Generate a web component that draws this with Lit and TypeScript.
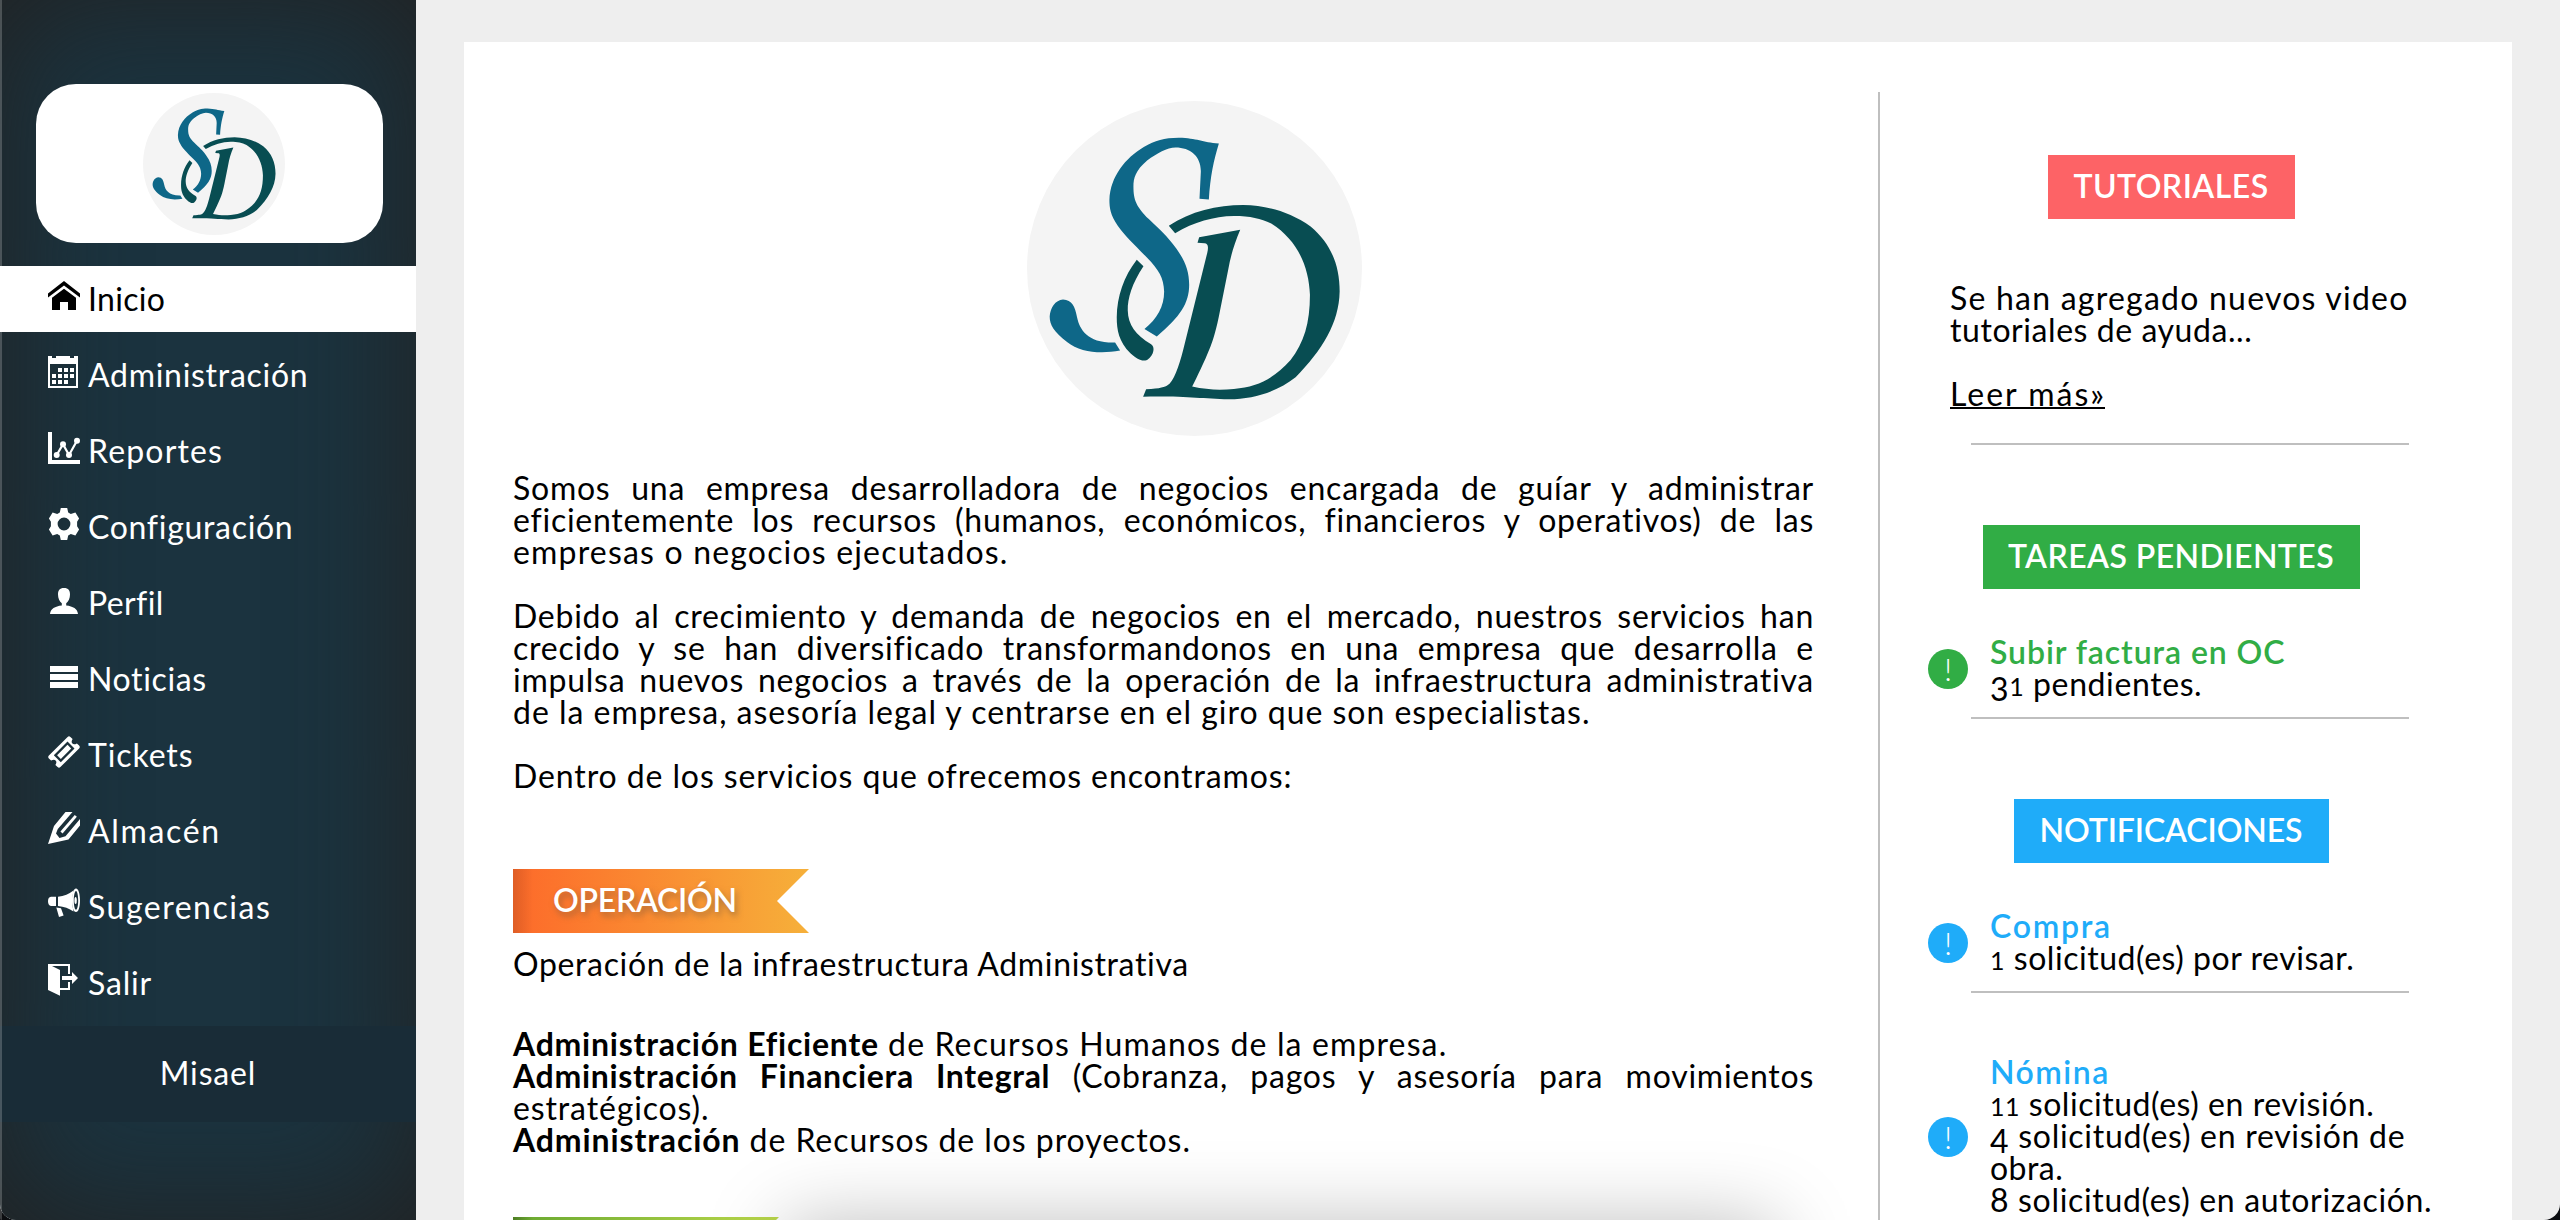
import { LitElement, html, svg, css } from "lit";
import { customElement, property } from "lit/decorators.js";

const ICONS: Record<string, unknown> = {
  home: svg`<path d="M16 1 32 13.5v4L16 5.5 0 17.5v-4zM16 8.7l12 9V30h-8v-8h-8v8H4V17.7z"/>`,
  calendar: svg`<path fill-rule="evenodd" d="M0 0h4v2h4V0h14v2h4V0h4v32H0zM2 8v22h26V8zM10 12h4v4h-4zm6 0h4v4h-4zm6 0h4v4h-4zM4 18h4v4H4zm6 0h4v4h-4zm6 0h4v4h-4zm6 0h4v4h-4zM4 24h4v4H4zm6 0h4v4h-4zm6 0h4v4h-4z"/>`,
  chart: svg`<path d="M0 0h4v28h28v4H0z"/><path d="M8.7 23 15 12.3 21 23 29 8.7" fill="none" stroke="currentColor" stroke-width="2.2"/><circle cx="8.7" cy="23" r="3"/><circle cx="15" cy="12.3" r="3"/><circle cx="21" cy="23" r="3"/><circle cx="29" cy="8.7" r="3"/>`,
  gear: svg`<path fill-rule="evenodd" d="M12.8 0h6.4l1 4.6 2.6 1.5 4.6-1.5 3.7 6-2 3.2v4.4l2 3.2-3.7 6-4.6-1.5-2.6 1.5-1 4.6h-6.4l-1-4.6-2.6-1.5-4.6 1.5-3.7-6 2-3.2v-4.4l-2-3.2 3.7-6 4.6 1.5 2.6-1.5zM16 9.6a6.4 6.4 0 1 0 0 12.8 6.4 6.4 0 0 0 0-12.8z"/>`,
  person: svg`<path d="M16 4c4.5 0 6 2.5 6 6.5 0 4-1.6 7-3.8 8.7v2.4C25 22.3 29.5 25 30 30H2c.5-5 5-7.7 11.8-8.4v-2.4C11.6 17.5 10 14.5 10 10.5 10 6.5 11.5 4 16 4z"/>`,
  lines: svg`<path d="M2 6h28v6H2zm0 8h28v6H2zm0 8h28v6H2z"/>`,
  ticket: svg`<path fill-rule="evenodd" d="M19.6.9Q21-.5 22.4.9L24.6 3.1Q22.8 6 24.4 7.6 26 9.2 28.9 7.4L31.1 9.6Q32.5 11 31.1 12.4L12.4 31.1Q11 32.5 9.6 31.1L7.4 28.9Q9.2 26 7.6 24.4 6 22.8 3.1 24.6L.9 22.4Q-.5 21 .9 19.6zM19.5 5.5 5.8 19.2 12.8 26.2 26.5 12.5z"/><path d="M19.5 8.8 23.2 12.5 12.8 22.9 9.1 19.2z"/>`,
  pencil: svg`<path d="M0 32 6 14 17.5 0H24.5L9.8 17 8 21.5 11.5 26 17.5 24.2 32 7V13.5L20.5 27.5z"/><path d="M27.8 3.8 13.5 20.5" fill="none" stroke="currentColor" stroke-width="2.8"/>`,
  horn: svg`<path d="M8 8.7v9.3H3Q0 17.5 0 13.3 0 9 3 8.7zM10 8.7Q19 7.5 25.5 2.4 23 13 25.5 23.6 19 18.8 10 18zM8.3 19.6l4.7.6 2.6 7.3-4.6 1.5z"/><path fill-rule="evenodd" d="M28 .5c2.5 0 4 5.500 4 12s-1.500 11.600-4 11.600-4-5.100-4-11.600 1.500-12 4-12zm0 2.500c-1.200 0-2.200 4.400-2.200 9.500s1 9.200 2.200 9.200 2.200-4.100 2.200-9.200-1-9.500-2.200-9.500z"/><ellipse cx="27.600" cy="12.600" rx="1.200" ry="3.500"/>`,
  exit: svg`<path d="M0 0h22v10h-2V2H4l8 4v25.700L0 26zM12 24h8v-6h2v8H12zM14 12h10V8l6 6-6 6v-4H14z"/>`,
};

/** A single line of text whose tracking is adjusted to fill a given measure. */
@customElement("fit-line")
export class FitLine extends LitElement {
  @property({ type: Number }) w = 0;

  static styles = css`
    :host { display: block; white-space: pre; }
    .run { display: inline-block; }
  `;

  firstUpdated() {
    const run = this.renderRoot.querySelector(".run") as HTMLElement;
    const count = (this.textContent ?? "").length;
    const natural = run.getBoundingClientRect().width;
    if (this.w && count > 1) {
      this.style.letterSpacing = `${(this.w - natural) / (count - 0.5)}px`;
    }
  }

  render() {
    return html`<span class="run"><slot></slot></span>`;
  }
}

@customElement("brand-mark")
export class BrandMark extends LitElement {
  static styles = css`
    :host { display: block; }
    svg { display: block; width: 100%; height: 100%; }
    .disc { fill: #f4f4f4; }
    .blue { fill: #0e6788; }
    .teal { fill: #084d52; }
  `;

  render() {
    return html`<svg viewBox="80 64 1004 1004">
      <circle class="disc" cx="582" cy="566" r="502" />
      <path class="blue" d="M655 191C640 240 629 290 625 359L597 357 601 276C602 230 570 203 525 203 500 203 470 220 440 242 405 272 399 295 399 320 399 362 408 380 445 418 480 452 498 466 528 507 555 545 566 575 566 615 566 670 540 710 469 770L432 747C470 717 491 680 491 635 490 595 475 570 440 534 400 493 375 470 352 438 330 405 327 385 327 360 330 290 375 235 430 202 465 182 490 174 535 174 590 175 605 188 655 191Z" />
      <path class="blue" d="M344 788 359 812C300 822 240 818 200 786 160 755 148 735 148 710 149 685 165 660 188 659 215 660 224 680 230 712 238 750 262 790 344 788Z" />
      <path class="teal" d="M409 540 429 559C395 610 381 655 382 692 383 735 405 765 452 793 464 800 462 825 440 840 425 845 412 840 390 820 355 785 349 750 349 712 350 650 370 590 409 540Z" />
      <path class="teal" d="M505 438C570 395 650 376 728 376 800 378 865 395 930 440 990 490 1017 555 1017 635 1015 730 965 810 885 892 830 935 760 957 685 958 600 956 560 948 428 950L437 928C480 927 495 920 500 917 520 905 535 860 548 810L620 520C625 500 622 490 612 490L591 489 596 472 719 450C700 495 690 530 683 570L659 690C648 750 636 785 630 800 610 850 590 890 575 920 620 930 660 931 700 927 770 920 815 900 870 840 910 790 928 730 928 645 925 560 890 480 812 431 780 417 750 409 700 409 640 410 580 427 524 460Z" />
    </svg>`;
  }
}

interface NavItem { icon: string; label: string; w: number; active?: boolean; }

const NAV: NavItem[] = [
  { icon: "home", label: "Inicio", w: 77, active: true },
  { icon: "calendar", label: "Administración", w: 220 },
  { icon: "chart", label: "Reportes", w: 134.5 },
  { icon: "gear", label: "Configuración", w: 204.5 },
  { icon: "person", label: "Perfil", w: 75 },
  { icon: "lines", label: "Noticias", w: 119 },
  { icon: "ticket", label: "Tickets", w: 105 },
  { icon: "pencil", label: "Almacén", w: 132 },
  { icon: "horn", label: "Sugerencias", w: 182.5 },
  { icon: "exit", label: "Salir", w: 63.5 },
];

@customElement("side-nav")
export class SideNav extends LitElement {
  static styles = css`
    :host {
      display: block;
      box-sizing: border-box;
      width: 416px;
      height: 1220px;
      padding-top: 84px;
      background: #1b333f;
      box-shadow: inset 0 0 130px #222222;
      border-bottom-left-radius: 16px;
      color: #fff;
    }
    .brand {
      display: flex;
      justify-content: center;
      align-items: center;
      width: 347px;
      height: 159px;
      margin: 0 0 23px 36px;
      border-radius: 40px;
      background: #fff;
    }
    brand-mark { width: 142px; height: 142px; margin-left: 9px; }
    .item {
      display: flex;
      height: 66px;
      margin-bottom: 10px;
      padding: 14px 0 0 48px;
      box-sizing: border-box;
      gap: 8px;
    }
    .active { background: #fff; color: #000; }
    .icon { width: 32px; height: 32px; fill: currentColor; flex: none; overflow: visible; }
    .label { margin-top: 3px; }
    .user {
      display: flex;
      justify-content: center;
      height: 96px;
      padding-top: 31px;
      box-sizing: border-box;
      background: #192c37;
    }
  `;

  render() {
    return html`
      <div class="brand"><brand-mark></brand-mark></div>
      ${NAV.map((n) => html`
        <div class="item ${n.active ? "active" : ""}">
          <svg class="icon" viewBox="0 0 32 32">${ICONS[n.icon]}</svg>
          <fit-line class="label" .w=${n.w}>${n.label}</fit-line>
        </div>`)}
      <div class="user"><fit-line .w=${96}>Misael</fit-line></div>
    `;
  }
}

@customElement("alert-note")
export class AlertNote extends LitElement {
  static styles = css`
    :host { display: flex; align-items: center; gap: 22px; color: #000; }
    .dot {
      display: flex;
      justify-content: center;
      align-items: center;
      width: 40px;
      height: 40px;
      margin-top: 2px;
      flex: none;
      border-radius: 50%;
      background: var(--accent);
      color: #fff;
      font-weight: 300;
    }
  `;

  render() {
    return html`<div class="dot">!</div><div><slot></slot></div>`;
  }
}

@customElement("app-root")
export class AppRoot extends LitElement {
  static styles = css`
    :host {
      display: block;
      width: 2560px;
      height: 1220px;
      overflow: hidden;
      position: relative;
      background: #0b0d10;
      font-family: "Lato", "Open Sans", sans-serif;
      font-size: 32px;
      line-height: 32px;
      color: #000;
    }
    .page {
      display: flex;
      height: 1220px;
      background: #eee;
      border-radius: 0 0 16px 16px;
      overflow: hidden;
    }
    .edge {
      position: absolute;
      left: 0;
      top: 0;
      width: 2px;
      height: 1220px;
      background: rgba(255, 255, 255, 0.2);
      border-bottom-left-radius: 16px;
    }
    .card {
      display: flex;
      box-sizing: border-box;
      width: 2048px;
      height: 1178px;
      margin: 42px 0 0 48px;
      padding: 50px 0 0 49px;
      background: #fff;
    }
    .main { width: 1301px; padding-right: 64px; border-right: 2px solid #bfbfbf; }
    .logo { width: 335px; height: 335px; margin: 9px auto 36px 514px; }
    .para { margin-bottom: 32px; }
    .just { text-align: justify; text-align-last: justify; letter-spacing: 0.75px; }
    .just b { letter-spacing: 0.7px; }
    .row { display: flex; }
    .ribbon {
      width: 296px;
      height: 64px;
      box-sizing: border-box;
      padding: 15px 0 0 40px;
      font-weight: 600;
      color: #fff;
      text-shadow: 2px 4px 6px rgba(120, 90, 60, 0.6);
      clip-path: polygon(0 0, 100% 0, calc(100% - 32px) 50%, 100% 100%, 0 100%);
    }
    .orange { margin-top: 77px; background: linear-gradient(90deg, rgba(0,0,0,.12), transparent 20px), linear-gradient(90deg, #fd6a2a, #f6b03a); }
    .green { margin-top: 61px; width: 266px; background: linear-gradient(90deg, rgba(0,0,0,.25), transparent 20px), linear-gradient(90deg, #68a830, #bcd94c); }
    .sub { margin: 15px 0 48px; }
    b, .bold { font-weight: 700; }
    .side { flex: 1; padding-top: 63px; }
    .tag {
      display: flex;
      justify-content: center;
      box-sizing: border-box;
      height: 64px;
      margin-left: auto;
      margin-right: auto;
      padding-top: 15px;
      color: #fff;
      font-weight: 600;
    }
    .tags { padding-right: 50px; }
    .red { width: 247px; background: #fd6366; }
    .leaf { width: 377px; background: #31ad45; }
    .sky { width: 315px; background: #1facf9; }
    .intro { margin: 63px 0 34px 70px; }
    .more { width: 155px; height: 31px; margin-top: 32px; box-sizing: border-box; border-bottom: 2px solid #000; }
    .rule { width: 438px; height: 2px; margin-left: 91px; background: #bfbfbf; }
    .note { margin-left: 48px; }
    .g { --accent: #31ad45; }
    .b { --accent: #1facf9; }
    .head { font-weight: 600; }
    .g .head { color: #31ad45; }
    .b .head { color: #1facf9; }
    .small { font-size: 25px; line-height: 0; }
    .low { position: relative; top: 5px; line-height: 0; }
    .s1 { margin-top: 80px; }
    .s2 { margin-top: 47px; margin-bottom: 17px; }
    .s3 { margin-top: 63px; }
    .dock {
      position: absolute;
      left: 785px;
      top: 1224px;
      width: 990px;
      height: 200px;
      box-shadow: 0 0 80px rgba(0, 0, 0, 0.27);
    }
  `;

  render() {
    return html`
      <div class="page">
        <side-nav></side-nav>
        <div class="card">
          <div class="main">
            <brand-mark class="logo"></brand-mark>
            <div class="para">
              <div class="just">Somos una empresa desarrolladora de negocios encargada de guíar y administrar</div>
              <div class="just">eficientemente los recursos (humanos, económicos, financieros y operativos) de las</div>
              <fit-line .w=${495}>empresas o negocios ejecutados.</fit-line>
            </div>
            <div class="para">
              <div class="just">Debido al crecimiento y demanda de negocios en el mercado, nuestros servicios han</div>
              <div class="just">crecido y se han diversificado transformandonos en una empresa que desarrolla e</div>
              <div class="just">impulsa nuevos negocios a través de la operación de la infraestructura administrativa</div>
              <fit-line .w=${1077}>de la empresa, asesoría legal y centrarse en el giro que son especialistas.</fit-line>
            </div>
            <fit-line .w=${779}>Dentro de los servicios que ofrecemos encontramos:</fit-line>
            <div class="ribbon orange"><fit-line .w=${184}>OPERACIÓN</fit-line></div>
            <fit-line class="sub" .w=${676}>Operación de la infraestructura Administrativa</fit-line>
            <div class="row"><fit-line class="bold" .w=${365}>Administración Eficiente</fit-line><fit-line .w=${568}> de Recursos Humanos de la empresa.</fit-line></div>
            <div class="just"><b>Administración Financiera Integral</b> (Cobranza, pagos y asesoría para movimientos</div>
            <fit-line .w=${196}>estratégicos).</fit-line>
            <div class="row"><fit-line class="bold" .w=${227}>Administración</fit-line><fit-line .w=${450}> de Recursos de los proyectos.</fit-line></div>
            <div class="ribbon green"></div>
          </div>
          <div class="side">
            <div class="tags"><div class="tag red"><fit-line .w=${195}>TUTORIALES</fit-line></div></div>
            <div class="intro">
              <fit-line .w=${458}>Se han agregado nuevos video</fit-line>
              <fit-line .w=${302}>tutoriales de ayuda...</fit-line>
              <fit-line class="more" .w=${155}>Leer más»</fit-line>
            </div>
            <div class="rule"></div>
            <div class="tags"><div class="tag leaf s1"><fit-line .w=${326}>TAREAS PENDIENTES</fit-line></div></div>
            <alert-note class="note g s2">
              <fit-line class="head" .w=${295}>Subir factura en OC</fit-line>
              <fit-line .w=${212}><span class="low">3</span><span class="small">1</span> pendientes.</fit-line>
            </alert-note>
            <div class="rule"></div>
            <div class="tags"><div class="tag sky s1"><fit-line .w=${263}>NOTIFICACIONES</fit-line></div></div>
            <alert-note class="note b s2">
              <fit-line class="head" .w=${121}>Compra</fit-line>
              <fit-line .w=${364}><span class="small">1</span> solicitud(es) por revisar.</fit-line>
            </alert-note>
            <div class="rule"></div>
            <alert-note class="note b s3">
              <fit-line class="head" .w=${119}>Nómina</fit-line>
              <fit-line .w=${384}><span class="small">11</span> solicitud(es) en revisión.</fit-line>
              <fit-line .w=${415}><span class="low">4</span> solicitud(es) en revisión de</fit-line>
              <fit-line .w=${73}>obra.</fit-line>
              <fit-line .w=${442}>8 solicitud(es) en autorización.</fit-line>
            </alert-note>
          </div>
        </div>
      </div>
      <div class="dock"></div>
      <div class="edge"></div>
    `;
  }
}
